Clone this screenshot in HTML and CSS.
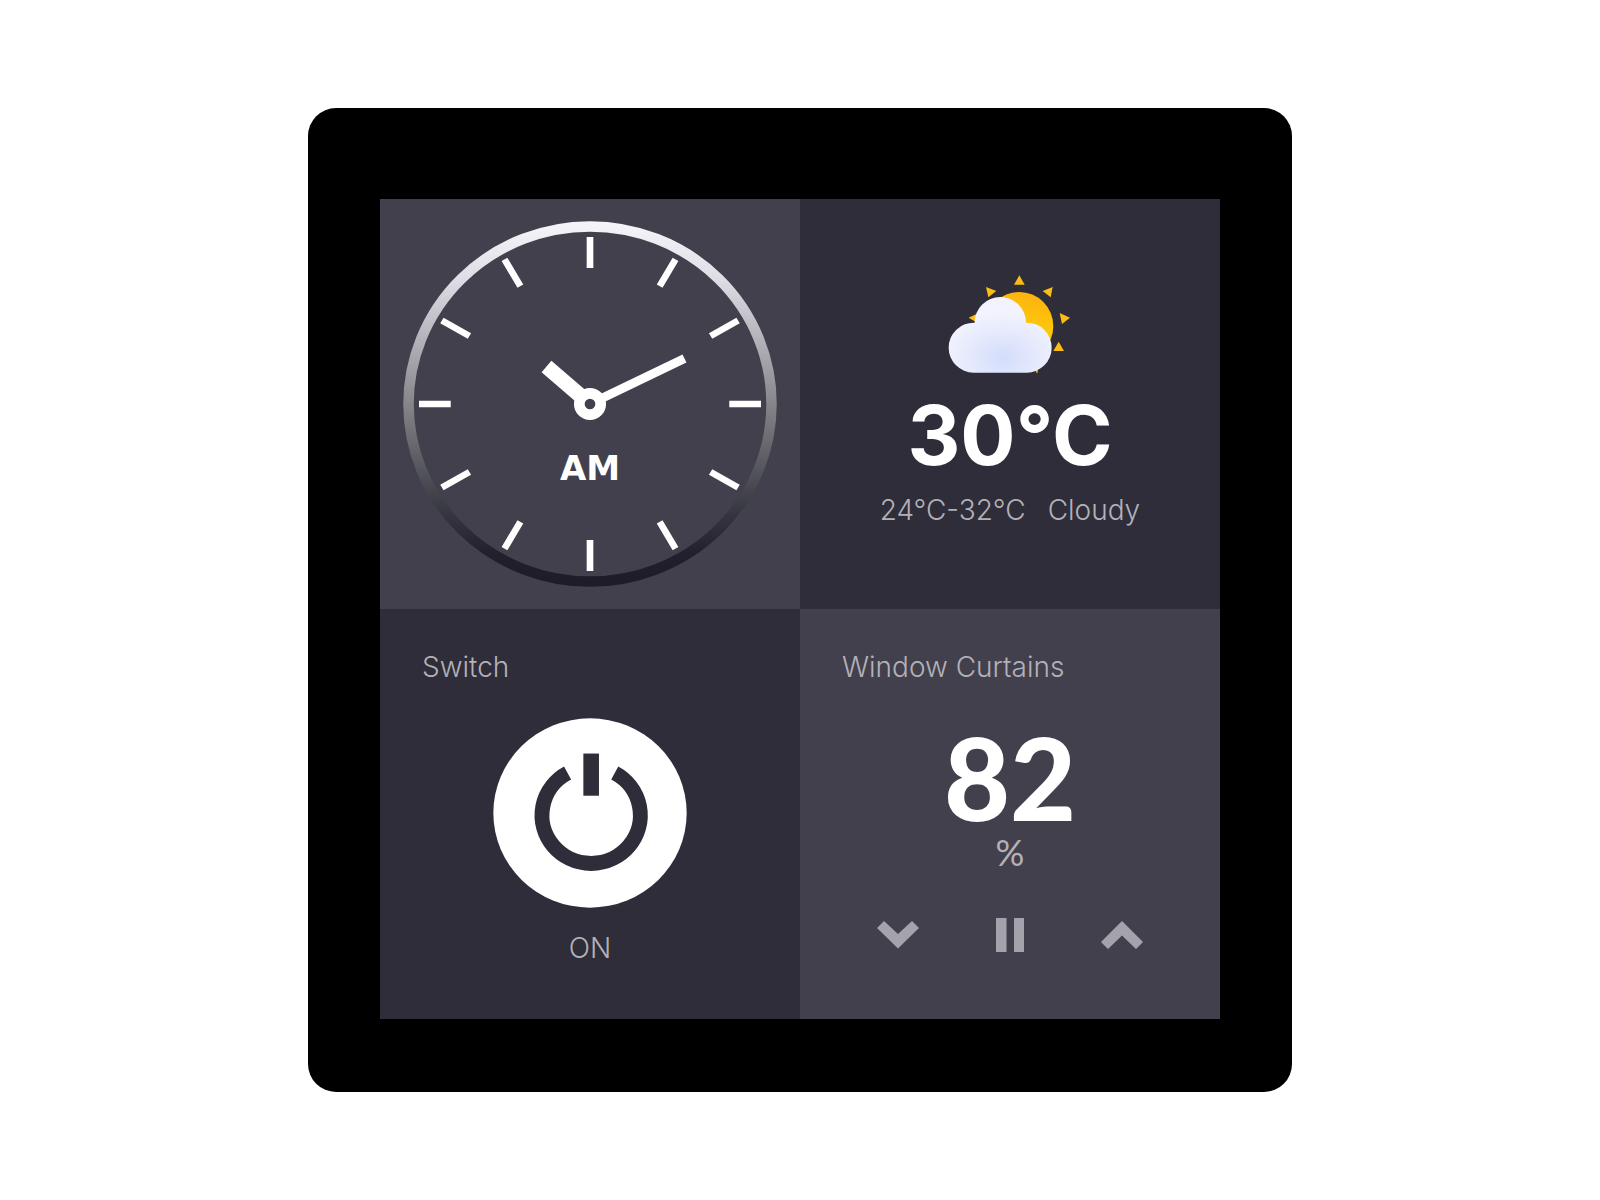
FILE: index.html
```html
<!DOCTYPE html>
<html lang="en">
<head>
    <meta charset="UTF-8">
    <meta name="viewport" content="width=device-width, initial-scale=1.0">
    <title>Smart Panel</title>
    <link rel="stylesheet" href="styles.css">
</head>
<body>
    <main class="panel">
        <div class="screen">
            <section class="tile tile-light clock">
                <svg class="clock-face" viewBox="0 0 420 410" role="img" aria-label="Clock">
                    <defs>
                        <linearGradient id="ring" x1="0" y1="0" x2="0" y2="1">
                            <stop offset="0" stop-color="#f4f3f7"/>
                            <stop offset="0.15" stop-color="#dedde6"/>
                            <stop offset="0.5" stop-color="#85858a"/>
                            <stop offset="0.78" stop-color="#3c3c45"/>
                            <stop offset="0.92" stop-color="#21202c"/>
                            <stop offset="1" stop-color="#1e1c29"/>
                        </linearGradient>
                    </defs>
                    <ellipse cx="210" cy="205" rx="181.5" ry="177.5" fill="none" stroke="url(#ring)" stroke-width="10.5"/>
                    <g transform="translate(210 205) scale(1.024 1)" stroke="#fff" stroke-width="6.5">
                        <path d="M0-167V-136"/>
                        <path d="M0-167V-136" transform="rotate(30)"/>
                        <path d="M0-167V-136" transform="rotate(60)"/>
                        <path d="M0-167V-136" transform="rotate(90)"/>
                        <path d="M0-167V-136" transform="rotate(120)"/>
                        <path d="M0-167V-136" transform="rotate(150)"/>
                        <path d="M0-167V-136" transform="rotate(180)"/>
                        <path d="M0-167V-136" transform="rotate(210)"/>
                        <path d="M0-167V-136" transform="rotate(240)"/>
                        <path d="M0-167V-136" transform="rotate(270)"/>
                        <path d="M0-167V-136" transform="rotate(300)"/>
                        <path d="M0-167V-136" transform="rotate(330)"/>
                    </g>
                    <path d="M210 205L304.5 159.5" stroke="#fff" stroke-width="9"/>
                    <path d="M210 205L166.5 167.5" stroke="#fff" stroke-width="15"/>
                    <circle cx="210" cy="205" r="10.7" fill="#43404d" stroke="#fff" stroke-width="10.7"/>
                    <text class="clock-period" x="210" y="281" text-anchor="middle">AM</text>
                </svg>
            </section>

            <section class="tile tile-dark weather">
                <svg class="weather-icon" viewBox="55 45 372 297" aria-hidden="true">
                    <defs>
                        <linearGradient id="sun" x1="0.8" y1="0" x2="0.5" y2="1">
                            <stop offset="0" stop-color="#fcb010"/>
                            <stop offset="0.5" stop-color="#fec70a"/>
                            <stop offset="1" stop-color="#f9ad08"/>
                        </linearGradient>
                        <radialGradient id="cloud" cx="0.53" cy="0.8" r="0.6">
                            <stop offset="0" stop-color="#d3ddfb"/>
                            <stop offset="0.5" stop-color="#e3e8fc"/>
                            <stop offset="1" stop-color="#f2f3fe"/>
                        </radialGradient>
                    </defs>
                    <g fill="#fbbd14">
                        <path d="M269 46L285 74H253Z"/>
                        <path d="M169 81L200 93L176 112Z"/>
                        <path d="M369 81L339 93L363 112Z"/>
                        <path d="M390 159L421 173L397 192Z"/>
                        <path d="M387 245L403 273H371Z"/>
                        <path d="M117 173L145 160V190Z"/>
                        <path d="M314 320H324V338H320Z"/>
                    </g>
                    <circle cx="269" cy="198" r="102" fill="url(#sun)"/>
                    <path d="M132 338A75 75 0 0 1 57 263A75 75 0 0 1 135 188A77 77 0 0 1 289 188A75 75 0 0 1 366 263A75 75 0 0 1 291 338Z" fill="url(#cloud)"/>
                </svg>
                <p class="temperature">30°C</p>
                <p class="forecast"><span>24°C-32°C</span><span>Cloudy</span></p>
            </section>

            <section class="tile tile-dark switch">
                <h2 class="tile-title">Switch</h2>
                <button type="button" class="power" aria-label="Power" aria-pressed="true">
                    <svg class="power-icon" viewBox="277 261 584 571" aria-hidden="true">
                        <ellipse cx="569" cy="547" rx="291" ry="285" fill="#fff"/>
                        <path d="M501.5 426.5A148 145 0 1 0 643.5 426.5" fill="none" stroke="#2f2d39" stroke-width="45"/>
                        <path d="M549 368H596V495H549Z" fill="#2f2d39"/>
                    </svg>
                </button>
                <p class="switch-state">ON</p>
            </section>

            <section class="tile tile-light curtains">
                <h2 class="tile-title">Window Curtains</h2>
                <p class="curtain-value">82</p>
                <p class="curtain-unit">%</p>
                <div class="curtain-controls">
                    <button type="button" class="control" aria-label="Close curtains">
                        <svg class="control-icon" viewBox="0 0 42 36" aria-hidden="true">
                            <path d="M0 11L7 4L21 17L35 4L42 11L21 31.5Z"/>
                        </svg>
                    </button>
                    <button type="button" class="control" aria-label="Pause">
                        <svg class="control-icon" viewBox="0 0 42 36" aria-hidden="true">
                            <path d="M7 1H17.5V35H7ZM25 1H35V35H25Z"/>
                        </svg>
                    </button>
                    <button type="button" class="control" aria-label="Open curtains">
                        <svg class="control-icon" viewBox="0 0 42 36" aria-hidden="true">
                            <path d="M0 25L21 4L42 25L35 32L21 18.5L7 32Z"/>
                        </svg>
                    </button>
                </div>
            </section>
        </div>
    </main>
</body>
</html>
```
FILE: styles.css
```css
* {
    box-sizing: border-box;
}
body {
    display: flex;
    align-items: center;
    justify-content: center;
    min-height: 100vh;
    margin: 0;
    background-color: #fff;
    font-family: Inter, "Noto Sans", sans-serif;
    color: #fff;
}
h2,
p {
    margin: 0;
}
button {
    padding: 0;
    border: none;
    background: none;
    cursor: pointer;
}
svg {
    display: block;
}
.panel {
    width: 100%;
    max-width: 984px;
    padding: 91px 72px 73px;
    background-color: #000;
    border-radius: 28px;
}
.screen {
    display: grid;
    grid-template-columns: 1fr 1fr;
    grid-auto-rows: minmax(410px, auto);
}
.tile {
    display: flex;
    flex-direction: column;
    align-items: center;
}
.tile-light {
    background-color: #43404d;
}
.tile-dark {
    background-color: #2f2d39;
}
.tile-title,
.forecast,
.switch-state {
    font-size: 28px;
    font-weight: 300;
    line-height: 40px;
    color: #b3b1b8;
}
.tile-title {
    align-self: flex-start;
    padding: 38px 0 0 42px;
}

/* Clock */
.clock-face {
    width: 100%;
}
.clock-period {
    font-family: "DejaVu Sans", sans-serif;
    font-size: 34px;
    font-weight: bold;
    fill: #fff;
}

/* Weather */
.weather {
    padding-top: 76px;
}
.weather-icon {
    width: 124px;
}
.temperature {
    margin-top: 21px;
    font-size: 82px;
    font-weight: 700;
    line-height: 82px;
}
.forecast {
    display: flex;
    gap: 22px;
    margin-top: 13px;
}

/* Switch */
.power {
    margin: 31px 0 20px;
    border-radius: 50%;
}
.power-icon {
    width: 194px;
}

/* Curtains */
.curtain-value {
    margin-top: 40px;
    font-family: Lato, sans-serif;
    font-size: 114px;
    font-weight: 900;
    line-height: 100px;
}
.curtain-unit {
    margin-top: 5px;
    font-family: Lato, sans-serif;
    font-size: 36px;
    line-height: 40px;
    color: #b3b1b8;
}
.curtain-controls {
    display: flex;
    margin-top: 45px;
}
.control {
    display: flex;
    justify-content: center;
    width: 112px;
}
.control-icon {
    width: 42px;
    fill: #a4a2aa;
}
```
